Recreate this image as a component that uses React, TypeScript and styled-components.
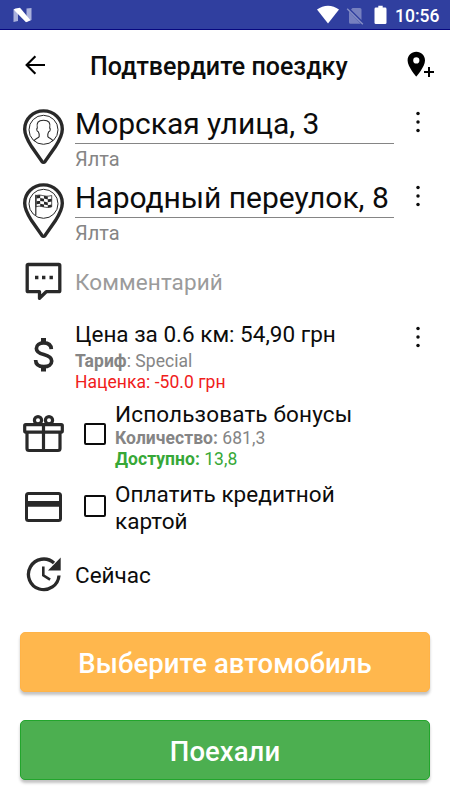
import React from "react";
import styled, { createGlobalStyle } from "styled-components";

const GlobalStyle = createGlobalStyle`
  * { box-sizing: border-box; }
  body { margin: 0; background: #fff; }
  button { font-family: inherit; }
`;

const Screen = styled.div`
  width: 450px;
  height: 800px;
  display: flex;
  flex-direction: column;
  overflow: hidden;
  background: #fff;
  color: #0c0c0c;
  font-family: Roboto, "Noto Sans", sans-serif;
`;

const StatusBar = styled.header`
  height: 30px;
  flex: none;
  display: flex;
  align-items: center;
  background: #303f9f;
  border-bottom: 1px solid #07077f;
  color: #fff;
  padding: 0 10px 0 12px;
`;

const StatusIcons = styled.div`
  margin-left: auto;
  display: flex;
  align-items: center;
`;

const SimSlot = styled.span`
  display: flex;
  margin: 0 10px 0 7px;
  padding-top: 2px;
`;

const Clock = styled.span`
  font-size: 17.5px;
  font-weight: 500;
  line-height: 29px;
  width: 45px;
  margin-left: 8px;
  padding-top: 3px;
`;

const Toolbar = styled.div`
  height: 74px;
  flex: none;
  display: flex;
  align-items: center;
  padding: 0 15px 4px 24px;
`;

const Title = styled.h1`
  margin: 0 0 0 44px;
  font-size: 25px;
  font-weight: 500;
  line-height: 36px;
  letter-spacing: 0.04px;
  padding-top: 4px;
  white-space: nowrap;
`;

const IconButton = styled.button<{ $push?: boolean }>`
  border: 0;
  padding: 0;
  background: none;
  color: #000;
  display: flex;
  margin-left: ${(p) => (p.$push ? "auto" : "0")};
`;

const Row = styled.section<{ $height: number; $gap?: number }>`
  height: ${(p) => p.$height}px;
  margin-top: ${(p) => p.$gap ?? 0}px;
  flex: none;
  display: grid;
  grid-template-columns: 52px 319px 48px;
  padding-left: 23px;
`;

const IconCell = styled.div<{ $top: number }>`
  padding-top: ${(p) => p.$top}px;
  line-height: 0;
`;

const Content = styled.div`
  min-width: 0;
  white-space: nowrap;
`;

const Address = styled.div`
  height: 40px;
  line-height: 39px;
  font-size: 30px;
  letter-spacing: -0.03px;
  border-bottom: 1px solid #858585;
`;

const City = styled.div`
  font-size: 20px;
  line-height: 30px;
  color: #858585;
`;

const Comment = styled.div`
  font-size: 22.5px;
  line-height: 61px;
  letter-spacing: 0.1px;
  color: #9b9b9b;
`;

const Heading = styled.div<{ $line: number; $tracking?: number }>`
  font-size: 22.5px;
  line-height: ${(p) => p.$line}px;
  letter-spacing: ${(p) => p.$tracking ?? 0}px;
`;

const DetailGroup = styled.div<{ $gap?: number }>`
  padding-top: ${(p) => p.$gap ?? 0}px;
`;

const Detail = styled.div<{ $color: string }>`
  font-size: 17.5px;
  line-height: 21px;
  letter-spacing: 0.04px;
  color: ${(p) => p.$color};
`;

const Option = styled.div`
  display: grid;
  grid-template-columns: 40px 1fr;
`;

const Checkbox = styled.span<{ $top: number }>`
  width: 22px;
  height: 22px;
  margin: ${(p) => p.$top}px 0 0 9px;
  border: 2px solid #0c0c0c;
  border-radius: 2px;
`;

const MenuCell = styled.div<{ $top: number }>`
  padding: ${(p) => p.$top}px 0 0 20px;
  line-height: 0;
`;

const Actions = styled.div`
  margin-top: auto;
  padding: 0 20px 20px;
  display: flex;
  flex-direction: column;
  gap: 28px;
`;

const ActionButton = styled.button<{ $bg: string; $edge: string }>`
  height: 60px;
  border: 1px solid ${(p) => p.$edge};
  border-radius: 5px;
  background: ${(p) => p.$bg};
  box-shadow: 0 3px 3px rgba(0, 0, 0, 0.24);
  color: #fff;
  font-size: 27.5px;
  font-weight: 500;
  line-height: 58px;
  letter-spacing: 0.06px;
  padding: 2px 0 0;
`;

const ink = "#292929";

const NougatLogo = () => (
  <svg width="20" height="16" viewBox="0 0 20 16">
    <path d="M1.500 2.500l4.500 3v8.500L1.500 15zM14.500 1.500 19.500 1v12l-5 2z" fill="#aab1dc" />
    <path d="M3.500 1.500 8 .8l10.500 12.500-4.500 2L1.500 2.500z" fill="#fff" />
  </svg>
);

const Wifi = () => (
  <svg width="22" height="19" viewBox="0 0 22 19">
    <path d="M0 4.600C6.500-.7 15.500-.7 22 4.600L11 18.500z" fill="#fff" />
  </svg>
);

const NoSim = () => (
  <svg width="18" height="18" viewBox="0 0 18 18">
    <path d="M6.500 1H14q1.500 0 1.500 1.500V13L5 2.600zM3 4.500 14.800 16.700H4.400Q3 16.700 3 15.200z" fill="#7680bf" />
    <path d="M1.200 1.700l15.600 15.600" stroke="#8790c7" strokeWidth="1.400" />
  </svg>
);

const Battery = () => (
  <svg width="13" height="20" viewBox="0 0 13 20">
    <path d="M4.300.7h4.400v1.900h2.400q1.400 0 1.400 1.400v13.700q0 1.400-1.400 1.400H1.900Q.5 19.100.5 17.700V4q0-1.400 1.400-1.400h2.400z" fill="#fff" />
  </svg>
);

const BackArrow = () => (
  <svg width="22" height="20" viewBox="0 0 22 20" fill="none" stroke="#000" strokeWidth="2.100">
    <path d="M21 10H3M11.400 1.200 2.600 10l8.800 8.800" />
  </svg>
);

const AddPlace = () => (
  <svg width="28" height="28" viewBox="0 0 28 28">
    <path
      d="M9.300.8C4.400.8.600 4.600.600 9.400c0 6.200 8.700 16.100 8.700 16.100S18 15.600 18 9.400C18 4.600 14.200.8 9.300.8zm0 11.700a3.100 3.100 0 1 1 0-6.200 3.100 3.100 0 0 1 0 6.200z"
      fill="#000"
    />
    <path d="M22 16v10M17 21h10" stroke="#000" strokeWidth="2" />
  </svg>
);

const Pin = ({ children }: { children: React.ReactNode }) => (
  <svg width="41" height="56" viewBox="0 0 41 56" fill="none">
    <path
      d="M20.500 1.900C10 1.900 1.700 10 1.700 20.200c0 6.100 3.300 11.800 7 17.600l10.100 14.500q1.700 1.900 3.400 0L32.300 37.800c3.700-5.800 7-11.500 7-17.600C39.300 10 31 1.900 20.500 1.900z"
      stroke={ink}
      strokeWidth="3.400"
    />
    <circle cx="20.500" cy="20.800" r="14.500" stroke={ink} strokeWidth="1" />
    {children}
  </svg>
);

const Person = () => (
  <path
    d="M11 31.500c1-2.700 4.700-2.600 5.200-4.500.5-1.600-.2-3.400-.9-4.700-1.700-.5-1.900-3-1-3.800-1-5.300.8-7.800 6.200-7.800s7.200 2.500 6.200 7.800c.9.800.7 3.300-1 3.800-.7 1.300-1.400 3.100-.9 4.700.5 1.900 4.200 1.800 5.200 4.500"
    transform="translate(0 .5)"
    stroke={ink}
    strokeWidth="1.100"
  />
);

const RaceFlag = () => (
  <g>
    <path d="M12.800 11.800v20.400" stroke={ink} strokeWidth="1.200" />
    <path d="M13 12.800c5-2.400 8 2 15.700-.3v11.300c-7 2.300-10-2.200-15.700 0z" stroke={ink} strokeWidth=".8" />
    <path
      d="M13.500 12.500l3.700-.6v3l-3.700.5zM21 12.700l3.800.8v2.900l-3.800-.8zM17.200 15l3.800.7v2.900l-3.800-.7zM24.800 16.300l3.900-.6v2.900l-3.900.6zM13.500 18.300l3.700-.5v2.900l-3.700.5zM21 18.600l3.800.8v2.900l-3.800-.8zM17.200 20.700l3.800.7v2.700l-3.800-.9zM24.800 22.200l3.900-.8v2.500l-3.900.6z"
      fill={ink}
    />
  </g>
);

const CommentIcon = () => (
  <svg width="41" height="40" viewBox="0 0 41 40">
    <path
      d="M5.200 2.500h30.600q1 0 1 1v25.200q0 1-1 1H23.200L16.500 36.300v-6.600H5.200q-1 0-1-1V3.500q0-1 1-1z"
      fill="none"
      stroke={ink}
      strokeWidth="3.300"
      strokeLinejoin="round"
    />
    <path d="M12 15.500h3.400M19 15.500h3.400M26.500 15.500h3.400" stroke={ink} strokeWidth="3.400" />
  </svg>
);

const Dollar = () => (
  <svg width="41" height="36" viewBox="0 0 41 36" fill="none" stroke={ink}>
    <path d="M20.500 1v6M20.500 28v6.500" strokeWidth="5" />
    <path
      d="M28.300 12.200c-.2-4-3-6.300-7.600-6.300-4.300 0-7.300 2.200-7.300 5.500 0 3.700 3.200 5 7.400 6.100 4.700 1.200 7.900 2.700 7.900 6.500 0 3.600-3.200 5.700-7.800 5.700-5.200 0-8.200-2.500-8.300-6.700"
      strokeWidth="3.700"
    />
  </svg>
);

const Gift = () => (
  <svg width="41" height="40" viewBox="0 0 41 40" fill="none" stroke={ink} strokeWidth="3.200">
    <rect x="1.700" y="10.600" width="37.600" height="7.500" rx="1" />
    <path d="M4 18v16.500q0 2 2 2h29q2 0 2-2V18M20.500 10v26" />
    <circle cx="15" cy="6.200" r="3.600" />
    <circle cx="26" cy="6.200" r="3.600" />
  </svg>
);

const CreditCard = () => (
  <svg width="41" height="32" viewBox="0 0 41 32">
    <rect x="3.500" y="2.500" width="34" height="27" rx="2" fill="none" stroke={ink} strokeWidth="3" />
    <path d="M3 12.800h35" stroke={ink} strokeWidth="5.800" />
  </svg>
);

const ClockIcon = () => (
  <svg width="41" height="36" viewBox="0 0 41 36">
    <path d="M36 19.500A15.300 15.300 0 1 1 31 7" fill="none" stroke={ink} strokeWidth="3.300" />
    <path d="M37.700 1.500v13H25z" fill={ink} />
    <path d="M20.300 10.500v8.800l6.800 4.300" fill="none" stroke={ink} strokeWidth="2.600" />
  </svg>
);

const MoreDots = () => (
  <svg width="8" height="22" viewBox="0 0 8 22" fill="#0c0c0c">
    <circle cx="4" cy="2.500" r="1.750" />
    <circle cx="4" cy="11" r="1.750" />
    <circle cx="4" cy="19.500" r="1.750" />
  </svg>
);

const stops = [
  { address: "Морская улица, 3", city: "Ялта", mark: <Person /> },
  { address: "Народный переулок, 8", city: "Ялта", mark: <RaceFlag /> },
];

export default function App() {
  return (
    <>
      <GlobalStyle />
      <Screen>
        <StatusBar>
          <NougatLogo />
          <StatusIcons>
            <Wifi />
            <SimSlot>
              <NoSim />
            </SimSlot>
            <Battery />
            <Clock>10:56</Clock>
          </StatusIcons>
        </StatusBar>
        <Toolbar>
          <IconButton aria-label="Назад">
            <BackArrow />
          </IconButton>
          <Title>Подтвердите поездку</Title>
          <IconButton $push aria-label="Добавить адрес">
            <AddPlace />
          </IconButton>
        </Toolbar>

        {stops.map((stop) => (
          <Row key={stop.address} $height={74}>
            <IconCell $top={5}>
              <Pin>{stop.mark}</Pin>
            </IconCell>
            <Content>
              <Address>{stop.address}</Address>
              <City>{stop.city}</City>
            </Content>
            <MenuCell $top={7}>
              <MoreDots />
            </MenuCell>
          </Row>
        ))}

        <Row $height={61}>
          <IconCell $top={10}>
            <CommentIcon />
          </IconCell>
          <Comment>Комментарий</Comment>
        </Row>

        <Row $height={72} $gap={8}>
          <IconCell $top={16}>
            <Dollar />
          </IconCell>
          <Content>
            <Heading $line={26}>Цена за 0.6 км: 54,90 грн</Heading>
            <DetailGroup $gap={4}>
              <Detail $color="#858585">
                <b>Тариф</b>: Special
              </Detail>
              <Detail $color="#f0201b">Наценка: -50.0 грн</Detail>
            </DetailGroup>
          </Content>
          <MenuCell $top={5}>
            <MoreDots />
          </MenuCell>
        </Row>

        <Row $height={70} $gap={7}>
          <IconCell $top={14}>
            <Gift />
          </IconCell>
          <Option>
            <Checkbox $top={23} />
            <Content>
              <Heading $line={28} $tracking={0.15}>
                Использовать бонусы
              </Heading>
              <DetailGroup>
                <Detail $color="#858585">
                  <b>Количество:</b> 681,3
                </Detail>
                <Detail $color="#37a837">
                  <b>Доступно:</b> 13,8
                </Detail>
              </DetailGroup>
            </Content>
          </Option>
        </Row>

        <Row $height={54} $gap={11}>
          <IconCell $top={10}>
            <CreditCard />
          </IconCell>
          <Option>
            <Checkbox $top={14} />
            <Content>
              <Heading $line={26.5} $tracking={0.05}>
                Оплатить кредитной
                <br />
                картой
              </Heading>
            </Content>
          </Option>
        </Row>

        <Row $height={40} $gap={20}>
          <IconCell $top={1}>
            <ClockIcon />
          </IconCell>
          <Heading $line={40}>Сейчас</Heading>
        </Row>

        <Actions>
          <ActionButton $bg="#ffb74d" $edge="#ffb347">
            Выберите автомобиль
          </ActionButton>
          <ActionButton $bg="#4caf50" $edge="#22a52c">
            Поехали
          </ActionButton>
        </Actions>
      </Screen>
    </>
  );
}
